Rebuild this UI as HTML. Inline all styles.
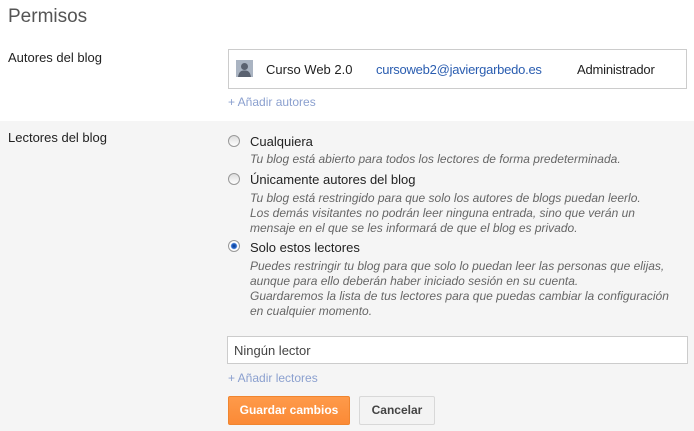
<!DOCTYPE html>
<html><head><meta charset="utf-8"><style>
body{margin:0;width:694px;height:431px;overflow:hidden;font-family:"Liberation Sans",Arial,sans-serif;font-size:13px;color:#222;position:relative;background:#fff}
.a{position:absolute;white-space:nowrap}
.grey{position:absolute;left:0;top:121px;width:694px;height:310px;background:#f5f5f5}
.d{font-style:italic;font-size:12px;color:#666;line-height:15px}
.radio{position:absolute;width:10px;height:10px;border:1px solid #999;border-radius:50%;background:linear-gradient(#ddd,#fff)}
.link{color:#8ba0cf}
</style></head><body>
<div class="a" style="left:8px;top:6px;font-size:19px;color:#555">Permisos</div>
<div class="a" style="left:8px;top:50px">Autores del blog</div>
<div class="a" style="left:228px;top:49px;width:457px;height:38px;border:1px solid #ccc;background:#fff"></div>
<svg class="a" style="left:236px;top:60px" width="17" height="17" viewBox="0 0 17 17"><rect width="17" height="17" fill="#aab4c2"/><circle cx="8.5" cy="6.5" r="3.5" fill="#5a6270"/><path d="M2 17 Q3 10 8.5 10.5 Q14 10 15 17Z" fill="#5a6270"/></svg>
<div class="a" style="left:266px;top:62px">Curso Web 2.0</div>
<div class="a" style="left:376px;top:62px;color:#2a5db0;letter-spacing:-0.25px">cursoweb2@javiergarbedo.es</div>
<div class="a" style="left:577px;top:62px;letter-spacing:-0.2px">Administrador</div>
<div class="a link" style="left:228px;top:95px;font-size:12px">+ Añadir autores</div>
<div class="grey"></div>
<div class="a" style="left:8px;top:130px">Lectores del blog</div>
<div class="radio" style="left:228px;top:135px"></div>
<div class="a" style="left:250px;top:134px">Cualquiera</div>
<div class="a d" style="left:250px;top:152px">Tu blog está abierto para todos los lectores de forma predeterminada.</div>
<div class="radio" style="left:228px;top:173px"></div>
<div class="a" style="left:250px;top:172px">Únicamente autores del blog</div>
<div class="a d" style="left:250px;top:191px">Tu blog está restringido para que solo los autores de blogs puedan leerlo.<br>Los demás visitantes no podrán leer ninguna entrada, sino que verán un<br>mensaje en el que se les informará de que el blog es privado.</div>
<div class="radio" style="left:228px;top:240px;background:radial-gradient(circle,#0a3a8a 0,#2a6ad0 2.5px,#fff 3.5px)"></div>
<div class="a" style="left:250px;top:240px">Solo estos lectores</div>
<div class="a d" style="left:250px;top:259px">Puedes restringir tu blog para que solo lo puedan leer las personas que elijas,<br>aunque para ello deberán haber iniciado sesión en su cuenta.<br>Guardaremos la lista de tus lectores para que puedas cambiar la configuración<br>en cualquier momento.</div>
<div class="a" style="left:227px;top:336px;width:459px;height:26px;border:1px solid #ccc;background:#fff"></div>
<div class="a" style="left:234px;top:343px;color:#444">Ningún lector</div>
<div class="a link" style="left:228px;top:371px;font-size:12px">+ Añadir lectores</div>
<div class="a" style="left:228px;top:396px;width:120px;height:27px;border:1px solid #f0852f;border-radius:2px;background:linear-gradient(#fe9a4a,#fb8a36);color:#fff;font-weight:bold;font-size:12px;text-align:center;line-height:27px">Guardar cambios</div>
<div class="a" style="left:359px;top:396px;width:74px;height:27px;border:1px solid #d8d8d8;border-radius:2px;background:#f3f3f3;color:#444;font-weight:bold;font-size:12px;text-align:center;line-height:27px">Cancelar</div>
</body></html>
